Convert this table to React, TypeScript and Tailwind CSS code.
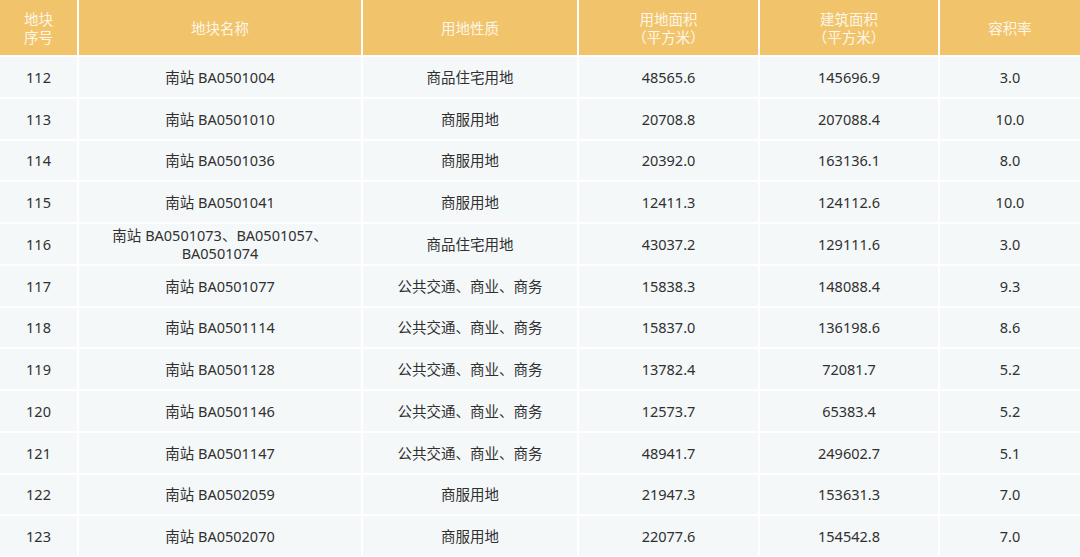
const headers = [
  ["地块", "序号"],
  ["地块名称"],
  ["用地性质"],
  ["用地面积", "（平方米）"],
  ["建筑面积", "（平方米）"],
  ["容积率"],
];

const rows: string[][] = [
  ["112", "南站 BA0501004", "商品住宅用地", "48565.6", "145696.9", "3.0"],
  ["113", "南站 BA0501010", "商服用地", "20708.8", "207088.4", "10.0"],
  ["114", "南站 BA0501036", "商服用地", "20392.0", "163136.1", "8.0"],
  ["115", "南站 BA0501041", "商服用地", "12411.3", "124112.6", "10.0"],
  ["116", "南站 BA0501073、BA0501057、\nBA0501074", "商品住宅用地", "43037.2", "129111.6", "3.0"],
  ["117", "南站 BA0501077", "公共交通、商业、商务", "15838.3", "148088.4", "9.3"],
  ["118", "南站 BA0501114", "公共交通、商业、商务", "15837.0", "136198.6", "8.6"],
  ["119", "南站 BA0501128", "公共交通、商业、商务", "13782.4", "72081.7", "5.2"],
  ["120", "南站 BA0501146", "公共交通、商业、商务", "12573.7", "65383.4", "5.2"],
  ["121", "南站 BA0501147", "公共交通、商业、商务", "48941.7", "249602.7", "5.1"],
  ["122", "南站 BA0502059", "商服用地", "21947.3", "153631.3", "7.0"],
  ["123", "南站 BA0502070", "商服用地", "22077.6", "154542.8", "7.0"],
];

export default function App() {
  return (
    <div
      className="w-[1080px] h-[557px] overflow-hidden bg-white"
      style={{ fontFamily: '"Noto Sans", "Noto Sans CJK SC", sans-serif' }}
    >
      <div className="grid grid-cols-[77px_282px_214px_179px_178px_140px] gap-[2px] bg-white">
        {headers.map((lines, i) => (
          <div
            key={i}
            className="h-[55px] bg-[#f1c46c] flex flex-col items-center justify-center text-[14.5px] leading-[18px] text-[#fdf6e6]"
          >
            {lines.map((l) => (
              <span key={l}>{l}</span>
            ))}
          </div>
        ))}
        {rows.map((row) =>
          row.map((cell, j) => (
            <div
              key={row[0] + "-" + j}
              className="h-[39.75px] bg-[#f5f8f9] flex flex-col items-center justify-center text-center text-[14.5px] leading-[18px] text-[#303030]"
            >
              {cell.split("\n").map((l) => (
                <span key={l}>{l}</span>
              ))}
            </div>
          ))
        )}
      </div>
    </div>
  );
}
